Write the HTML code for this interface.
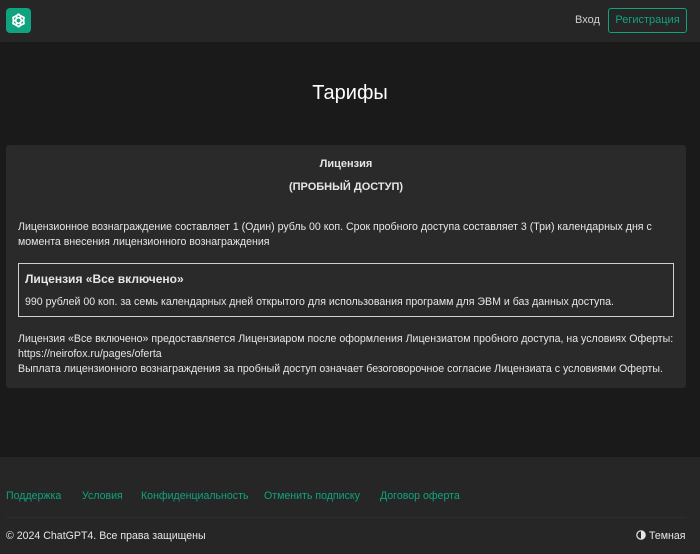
<!DOCTYPE html><html><head><meta charset="utf-8"><style>
*{margin:0;padding:0;box-sizing:border-box}
body{width:700px;height:554px;background:#1a1a1a;font-family:"Liberation Sans",sans-serif;color:#e6e6e6;font-size:10.6px;position:relative;overflow:hidden}
.hdr{position:absolute;left:0;top:0;width:700px;height:42px;background:#262626}
.logo{position:absolute;left:6px;top:8px;width:25px;height:25px;background:#10a37f;border-radius:4px}
.in{position:absolute;left:575px;top:14px;color:#cfcfcf;font-size:11px}
.reg{position:absolute;left:608px;top:8px;width:79px;height:25px;border:1px solid #10a37f;border-radius:3px;color:#10a37f;font-size:11px;text-align:center;line-height:23px}
h1{position:absolute;top:82px;width:100%;text-align:center;font-size:20px;font-weight:normal;color:#fff}
.card{position:absolute;left:6px;top:145px;width:680px;height:243px;background:#2a2a2a;border-radius:3px}
.t{position:absolute;width:100%;text-align:center;font-weight:bold;font-size:11px}
p{position:absolute;left:12px;line-height:15px;white-space:nowrap}
.box{position:absolute;left:12px;top:118px;width:656px;height:54px;border:1px solid #cfcfcf}
.ft{position:absolute;left:0;top:457px;width:700px;height:97px;background:#262626}
.ft a{position:absolute;top:33px;color:#10a37f;text-decoration:none;white-space:nowrap}
.ln{position:absolute;left:6px;top:60px;width:680px;height:1px;background:#2e2e2e}
</style></head><body>
<div class="hdr"><div class="logo"><svg width="25" height="25" viewBox="0 0 25 25"><g fill="none" stroke="#fff" stroke-width="1.2"><circle cx="12.5" cy="12.5" r="5.5"/><ellipse cx="12.5" cy="12.5" rx="2.5" ry="6.5"/><ellipse cx="12.5" cy="12.5" rx="2.5" ry="6.5" transform="rotate(60 12.5 12.5)"/><ellipse cx="12.5" cy="12.5" rx="2.5" ry="6.5" transform="rotate(-60 12.5 12.5)"/></g></svg></div>
<div class="in">Вход</div><div class="reg">Регистрация</div></div>
<h1>Тарифы</h1>
<div class="card">
<div class="t" style="top:13px">Лицензия</div>
<div class="t" style="top:36px">(ПРОБНЫЙ ДОСТУП)</div>
<p style="top:75px">Лицензионное вознаграждение составляет 1 (Один) рубль 00 коп. Срок пробного доступа составляет 3 (Три) календарных дня с<br>момента внесения лицензионного вознаграждения</p>
<div class="box"><div style="position:absolute;left:6px;top:8px;font-weight:bold;font-size:12px">Лицензия «Все включено»</div><div style="position:absolute;left:6px;top:32px;white-space:nowrap">990 рублей 00 коп. за семь календарных дней открытого для использования программ для ЭВМ и баз данных доступа.</div></div>
<p style="top:187px">Лицензия «Все включено» предоставляется Лицензиаром после оформления Лицензиатом пробного доступа, на условиях Оферты:<br>https://neirofox.ru/pages/oferta<br>Выплата лицензионного вознаграждения за пробный доступ означает безоговорочное согласие Лицензиата с условиями Оферты.</p>
</div>
<div class="ft">
<a style="left:6px">Поддержка</a><a style="left:82px">Условия</a><a style="left:141px">Конфиденциальность</a><a style="left:264px">Отменить подписку</a><a style="left:380px">Договор оферта</a>
<div class="ln"></div>
<div style="position:absolute;left:6px;top:73px">© 2024 ChatGPT4. Все права защищены</div>
<div style="position:absolute;left:636px;top:73px;white-space:nowrap"><svg width="10" height="10" viewBox="0 0 10 10" style="vertical-align:-1px"><circle cx="5" cy="5" r="4.2" fill="none" stroke="#e6e6e6" stroke-width="1.2"/><path d="M5 1a4 4 0 0 1 0 8z" fill="#e6e6e6"/></svg> Темная</div>
</div>
</body></html>
